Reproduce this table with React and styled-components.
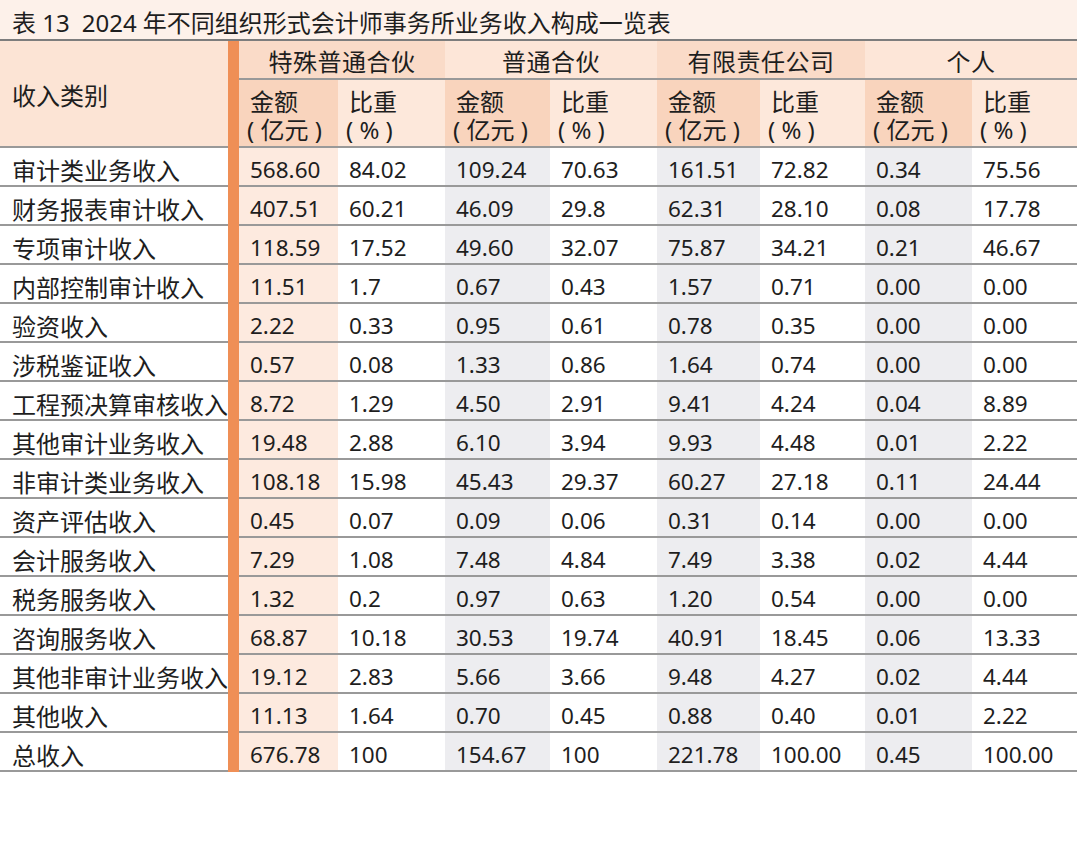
import React from 'react';
import styled, { createGlobalStyle } from 'styled-components';

const GlobalStyle = createGlobalStyle`
  body {
    margin: 0;
    background: #ffffff;
    font-family: "Noto Sans", "Noto Sans CJK SC", sans-serif;
    color: #1e1e1e;
  }
`;

const Page = styled.div`
  width: 1077px;
`;

const Title = styled.div`
  height: 41px;
  box-sizing: border-box;
  padding: 6px 0 0 12px;
  background: #fdf1ea;
  border-bottom: 2px solid #7d7d7d;
  font-size: 24px;
  line-height: 34px;
  white-space: pre;
`;

const Table = styled.div`
  display: grid;
  grid-template-columns: 228px 11px 99px 107px 105px 107px 103px 105px 107px 105px;
  grid-template-rows: 39px 68px repeat(16, 39px);
`;

const Bar = styled.div`
  grid-column: 2;
  grid-row: 1 / -1;
  background: #ef8f56;
`;

const HeadLabel = styled.div`
  grid-column: 1;
  grid-row: 1 / span 2;
  display: flex;
  align-items: center;
  padding-left: 12px;
  padding-top: 2px;
  box-sizing: border-box;
  background: #fce4d5;
  border-bottom: 2px solid #999;
  font-size: 24px;
`;

const GroupHead = styled.div`
  grid-row: 1;
  grid-column: ${p => p.$col} / span 2;
  display: flex;
  align-items: center;
  justify-content: center;
  padding-top: 2px;
  box-sizing: border-box;
  background: ${p => (p.$dark ? '#fadbc8' : '#fde6d8')};
  border-bottom: 2px solid #999;
  font-size: 24px;
  letter-spacing: 0.5px;
`;

const SubHead = styled.div`
  grid-row: 2;
  grid-column: ${p => p.$col};
  display: flex;
  flex-direction: column;
  justify-content: center;
  padding-left: 11px;
  padding-top: 6px;
  box-sizing: border-box;
  background: ${p => (p.$dark ? '#f9d4bd' : '#fde8db')};
  border-bottom: 2px solid #999;
  font-size: 24px;
  line-height: 28px;
`;

const Paren = styled.span`
  margin-left: -3px;
  white-space: pre;
`;

const LabelCell = styled.div`
  display: flex;
  align-items: center;
  padding-left: 12px;
  padding-top: 6px;
  box-sizing: border-box;
  border-bottom: 2px solid #999;
  font-size: 24px;
  white-space: nowrap;
`;

const NumCell = styled.div`
  display: flex;
  align-items: center;
  padding-left: 11px;
  padding-top: 6px;
  box-sizing: border-box;
  background: ${p => p.$bg};
  border-bottom: 2px solid #999;
  font-size: 22.5px;
`;

const groups = [
  { name: '特殊普通合伙', col: 3, dark: true },
  { name: '普通合伙', col: 5, dark: false },
  { name: '有限责任公司', col: 7, dark: true },
  { name: '个人', col: 9, dark: false },
];

const rows = [
  ['审计类业务收入', '568.60', '84.02', '109.24', '70.63', '161.51', '72.82', '0.34', '75.56'],
  ['财务报表审计收入', '407.51', '60.21', '46.09', '29.8', '62.31', '28.10', '0.08', '17.78'],
  ['专项审计收入', '118.59', '17.52', '49.60', '32.07', '75.87', '34.21', '0.21', '46.67'],
  ['内部控制审计收入', '11.51', '1.7', '0.67', '0.43', '1.57', '0.71', '0.00', '0.00'],
  ['验资收入', '2.22', '0.33', '0.95', '0.61', '0.78', '0.35', '0.00', '0.00'],
  ['涉税鉴证收入', '0.57', '0.08', '1.33', '0.86', '1.64', '0.74', '0.00', '0.00'],
  ['工程预决算审核收入', '8.72', '1.29', '4.50', '2.91', '9.41', '4.24', '0.04', '8.89'],
  ['其他审计业务收入', '19.48', '2.88', '6.10', '3.94', '9.93', '4.48', '0.01', '2.22'],
  ['非审计类业务收入', '108.18', '15.98', '45.43', '29.37', '60.27', '27.18', '0.11', '24.44'],
  ['资产评估收入', '0.45', '0.07', '0.09', '0.06', '0.31', '0.14', '0.00', '0.00'],
  ['会计服务收入', '7.29', '1.08', '7.48', '4.84', '7.49', '3.38', '0.02', '4.44'],
  ['税务服务收入', '1.32', '0.2', '0.97', '0.63', '1.20', '0.54', '0.00', '0.00'],
  ['咨询服务收入', '68.87', '10.18', '30.53', '19.74', '40.91', '18.45', '0.06', '13.33'],
  ['其他非审计业务收入', '19.12', '2.83', '5.66', '3.66', '9.48', '4.27', '0.02', '4.44'],
  ['其他收入', '11.13', '1.64', '0.70', '0.45', '0.88', '0.40', '0.01', '2.22'],
  ['总收入', '676.78', '100', '154.67', '100', '221.78', '100.00', '0.45', '100.00'],
];

// background of each number column, in order
const cellBg = (i) => {
  if (i === 0) return '#fdeadf';
  return i % 2 === 0 ? '#ededf0' : '#ffffff';
};

export default function App() {
  return (
    <Page>
      <GlobalStyle />
      <Title>{'表 13\u20022024 年不同组织形式会计师事务所业务收入构成一览表'}</Title>
      <Table>
        <Bar />
        <HeadLabel>收入类别</HeadLabel>
        {groups.map(g => (
          <GroupHead key={g.name} $col={g.col} $dark={g.dark}>{g.name}</GroupHead>
        ))}
        {groups.map(g => (
          <React.Fragment key={g.name + 'sub'}>
            <SubHead $col={g.col} $dark>
              <span>金额</span>
              <Paren>( 亿元 )</Paren>
            </SubHead>
            <SubHead $col={g.col + 1}>
              <span>比重</span>
              <Paren>( % )</Paren>
            </SubHead>
          </React.Fragment>
        ))}
        {rows.map(r => (
          <React.Fragment key={r[0]}>
            <LabelCell>{r[0]}</LabelCell>
            {r.slice(1).map((v, i) => (
              <NumCell key={i} $bg={cellBg(i)}>{v}</NumCell>
            ))}
          </React.Fragment>
        ))}
      </Table>
    </Page>
  );
}
